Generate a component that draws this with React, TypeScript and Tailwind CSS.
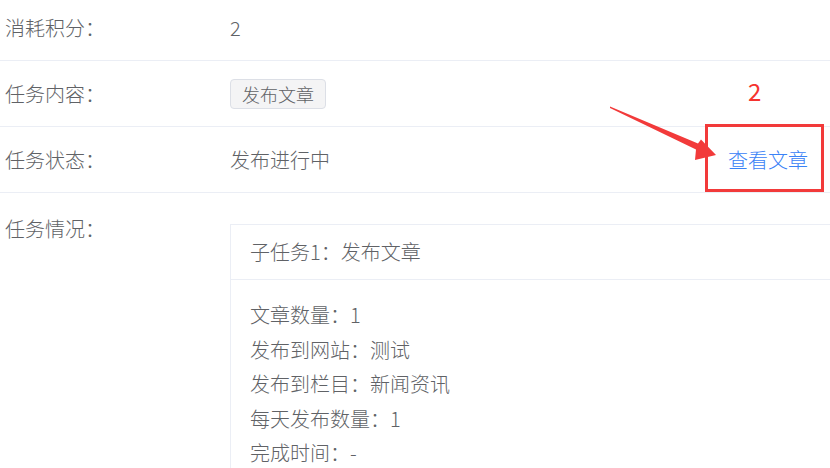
type Row = {
  label: string;
  value: React.ReactNode;
};

function TaskRow({ label, value, extra, first }: Row & { extra?: React.ReactNode; first?: boolean }) {
  return (
    <div
      className={`flex h-[66px] items-center border-b border-[#ebeef5] pl-[5px] pr-[22px] ${first ? "mt-[-5px]" : ""}`}
    >
      <div className="w-[225px] shrink-0 text-[20px] leading-[26px] text-[#606266]">{label}</div>
      <div className="flex-1 text-[20px] leading-[26px] text-[#606266]">{value}</div>
      {extra}
    </div>
  );
}

const details = [
  "文章数量：1",
  "发布到网站：测试",
  "发布到栏目：新闻资讯",
  "每天发布数量：1",
  "完成时间：-",
];

export default function App() {
  return (
    <div
      className="relative h-[468px] w-[830px] overflow-hidden bg-white font-light"
      style={{ fontFamily: '"Noto Sans CJK SC", "Noto Sans", sans-serif' }}
    >
      <TaskRow first label="消耗积分：" value="2" />
      <TaskRow
        label="任务内容："
        value={
          <span className="inline-flex h-[30px] items-center rounded-[4px] border border-[#dcdfe6] bg-[#f4f4f5] px-[11px] text-[18px] leading-none text-[#606266]">
            发布文章
          </span>
        }
      />
      <TaskRow
        label="任务状态："
        value="发布进行中"
        extra={<a className="text-[20px] leading-[26px] text-[#3a82f6]">查看文章</a>}
      />

      {/* 任务情况 */}
      <div className="flex items-start pl-[5px]">
        <div className="w-[225px] shrink-0 pt-[23px] text-[20px] leading-[26px] text-[#606266]">任务情况：</div>
        <div className="mt-[31px] flex-1 border-l border-t border-[#ebeef5]">
          <div className="flex h-[55px] items-center border-b border-[#ebeef5] px-[19px] text-[20px] text-[#606266]">
            子任务1：发布文章
          </div>
          <div className="px-[19px] pt-[18px] text-[20px] leading-[34.5px] text-[#606266]">
            {details.map((d) => (
              <div key={d}>{d}</div>
            ))}
          </div>
        </div>
      </div>

      {/* annotation overlay */}
      <span className="pointer-events-none absolute left-[748px] top-[74px] text-[24px] font-normal leading-[34px] text-[#f5332f]">2</span>
      <div className="pointer-events-none absolute left-[705px] top-[124px] h-[68px] w-[119px] border-[3px] border-[#f23a3a]" />
      <svg className="pointer-events-none absolute left-0 top-0" width="830" height="468" viewBox="0 0 830 468">
        <polygon
          points="610,106.5 698,143.5 701,139.5 716,155 695,160 696,149.5 610,108"
          fill="#f23a3a"
        />
      </svg>
    </div>
  );
}
